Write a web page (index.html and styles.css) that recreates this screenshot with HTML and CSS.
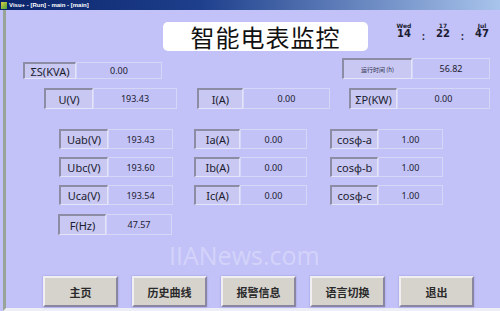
FILE: index.html
```html
<!DOCTYPE html>
<html lang="zh-CN">
<head>
  <meta charset="UTF-8">
  <meta name="viewport" content="width=device-width, initial-scale=1.0">
  <title>智能电表监控</title>
  <link rel="stylesheet" href="styles.css">
</head>
<body>

  <!-- 窗口标题栏 -->
  <div class="titlebar">
    <span class="app-icon"></span>
    <span class="titlebar-text">Visu+ - [Run] - main - [main]</span>
  </div>

  <div class="frame">

    <!-- 标题 + 时钟 -->
    <div class="header">
      <div class="title-box">智能电表监控</div>
      <div class="clock">
        <div class="clock-col"><span class="clock-small">Wed</span><span class="clock-big">14</span></div>
        <div class="clock-sep">:</div>
        <div class="clock-col"><span class="clock-small">17</span><span class="clock-big">22</span></div>
        <div class="clock-sep">:</div>
        <div class="clock-col"><span class="clock-small">Jul</span><span class="clock-big">47</span></div>
      </div>
    </div>

    <!-- 总视在功率 / 运行时间 -->
    <div class="row row-total">
      <div class="field f-kva">
        <span class="label">ΣS(KVA)</span><span class="value">0.00</span>
      </div>
      <div class="field f-runtime">
        <span class="label small-label">运行时间 (h)</span><span class="value">56.82</span>
      </div>
    </div>

    <!-- 电压 电流 功率 -->
    <div class="row row-main">
      <div class="field f-u"><span class="label">U(V)</span><span class="value">193.43</span></div>
      <div class="field f-i"><span class="label">I(A)</span><span class="value">0.00</span></div>
      <div class="field f-p"><span class="label">ΣP(KW)</span><span class="value">0.00</span></div>
    </div>

    <!-- 三相数据 -->
    <div class="row row-phase first">
      <div class="field f-uab"><span class="label">Uab(V)</span><span class="value">193.43</span></div>
      <div class="field f-ia"><span class="label">Ia(A)</span><span class="value">0.00</span></div>
      <div class="field f-cos"><span class="label">cosφ-a</span><span class="value">1.00</span></div>
    </div>
    <div class="row row-phase">
      <div class="field f-uab"><span class="label">Ubc(V)</span><span class="value">193.60</span></div>
      <div class="field f-ia"><span class="label">Ib(A)</span><span class="value">0.00</span></div>
      <div class="field f-cos"><span class="label">cosφ-b</span><span class="value">1.00</span></div>
    </div>
    <div class="row row-phase">
      <div class="field f-uab"><span class="label">Uca(V)</span><span class="value">193.54</span></div>
      <div class="field f-ia"><span class="label">Ic(A)</span><span class="value">0.00</span></div>
      <div class="field f-cos"><span class="label">cosφ-c</span><span class="value">1.00</span></div>
    </div>

    <!-- 频率 -->
    <div class="row row-freq">
      <div class="field f-hz"><span class="label">F(Hz)</span><span class="value">47.57</span></div>
    </div>

    <!-- 底部按钮 -->
    <div class="button-bar">
      <button class="nav-btn">主页</button>
      <button class="nav-btn">历史曲线</button>
      <button class="nav-btn">报警信息</button>
      <button class="nav-btn">语言切换</button>
      <button class="nav-btn">退出</button>
    </div>

    <div class="watermark">IIANews.com</div>
  </div>

</body>
</html>
```

FILE: styles.css
```css
/* === 基本 === */
* {
  box-sizing: border-box;
}
body {
  margin: 0;
  width: 500px;
  height: 311px;
  overflow: hidden;
  background: #c2c2f8;
  font-family: "Noto Sans", "Noto Sans CJK SC", sans-serif;
  color: #1c1c30;
}

/* === 标题栏 === */
.titlebar {
  height: 10px;
  display: flex;
  align-items: center;
  background: linear-gradient(to right, #0a246a 0%, #1e3f8c 40%, #a8c4ec 100%);
  padding-left: 1px;
}
.app-icon {
  width: 6px;
  height: 7px;
  background: linear-gradient(135deg, #e0d040, #40a040);
  margin-right: 2px;
}
.titlebar-text {
  font-family: "Liberation Sans", sans-serif;
  font-size: 6px;
  font-weight: bold;
  color: #ffffff;
}

/* === 主体 === */
.frame {
  position: relative;
  height: 301px;
  margin-left: 3px;
  border-left: 3px solid #98a498;
  border-bottom: 3px solid #eeeef6;
}

.header {
  display: flex;
  align-items: flex-start;
  padding-top: 12px;
  padding-left: 157px;
}
.title-box {
  width: 205px;
  height: 29px;
  background: #ffffff;
  border-radius: 5px;
  font-family: "Noto Sans CJK SC", sans-serif;
  font-size: 24px;
  line-height: 29px;
  text-align: center;
  color: #111111;
  letter-spacing: 1px;
}
.clock {
  display: flex;
  margin-left: 29px;
  margin-top: 0;
}
.clock-col {
  display: flex;
  flex-direction: column;
  align-items: center;
  width: 14px;
  font-family: "DejaVu Sans", sans-serif;
}
.clock-small {
  font-size: 6px;
  font-weight: bold;
  line-height: 7px;
}
.clock-big {
  font-size: 10px;
  font-weight: bold;
  line-height: 10px;
}
.clock-sep {
  width: 25px;
  text-align: center;
  font-size: 10px;
  font-weight: bold;
  padding-top: 7px;
}

/* === 数据框 === */
.row {
  display: flex;
  align-items: flex-start;
}
.field {
  display: flex;
  height: 20px;
}
.label {
  display: flex;
  align-items: center;
  justify-content: center;
  background: #c8c8f2;
  border-top: 2px solid #8c8ca4;
  border-left: 2px solid #8c8ca4;
  border-bottom: 1px solid #e4e4fa;
  border-right: 1px solid #e4e4fa;
  font-size: 11px;
}
.small-label {
  font-family: "Noto Sans CJK SC", sans-serif;
  font-size: 6px;
  color: #303050;
}
.value {
  display: flex;
  align-items: center;
  justify-content: center;
  background: #c2c2f6;
  border: 1px solid #d6d6f6;
  font-size: 9px;
}

.row-total {
  margin-top: 7px;
}
.f-kva {
  margin-left: 17px;
  margin-top: 4px;
  height: 17px;
}
.f-kva .label { width: 53px; }
.f-kva .value { width: 86px; }
.f-runtime {
  margin-left: 180px;
  height: 21px;
}
.f-runtime .label { width: 70px; }
.f-runtime .value { width: 78px; }

.row-main {
  margin-top: 9px;
}
.row-main .field { height: 21px; }
.f-u { margin-left: 38px; }
.f-u .label { width: 49px; }
.f-u .value { width: 84px; }
.f-i { margin-left: 20px; }
.f-i .label { width: 46px; }
.f-i .value { width: 87px; }
.f-p { margin-left: 19px; }
.f-p .label { width: 48px; }
.f-p .value { width: 93px; }

.row-phase {
  margin-top: 8px;
}
.row-phase.first {
  margin-top: 20px;
}
.f-uab { margin-left: 53px; }
.f-uab .label { width: 49px; }
.f-uab .value { width: 65px; }
.f-ia { margin-left: 21px; }
.f-ia .label { width: 46px; }
.f-ia .value { width: 67px; }
.f-cos { margin-left: 23px; }
.f-cos .label { width: 48px; }
.f-cos .value { width: 65px; }

.row-freq {
  margin-top: 9px;
}
.f-hz {
  margin-left: 52px;
  height: 21px;
}
.f-hz .label { width: 48px; }
.f-hz .value { width: 66px; }

/* === 底部按钮 === */
.button-bar {
  display: flex;
  gap: 14px;
  margin-top: 41px;
  padding-left: 37px;
}
.nav-btn {
  width: 75px;
  height: 31px;
  background: #d6d2cc;
  border-top: 2px solid #f0eef0;
  border-left: 2px solid #f0eef0;
  border-bottom: 2px solid #8a86a0;
  border-right: 2px solid #8a86a0;
  box-shadow: 0 0 2px #9a9ae0;
  font-family: "Noto Sans CJK SC", serif;
  font-size: 11px;
  font-weight: bold;
  color: #2a2a2a;
  padding: 0;
}

/* === 水印 === */
.watermark {
  position: absolute;
  left: 163px;
  top: 228px;
  font-family: "Open Sans", sans-serif;
  font-size: 25px;
  color: rgba(255, 255, 255, 0.3);
}
```
